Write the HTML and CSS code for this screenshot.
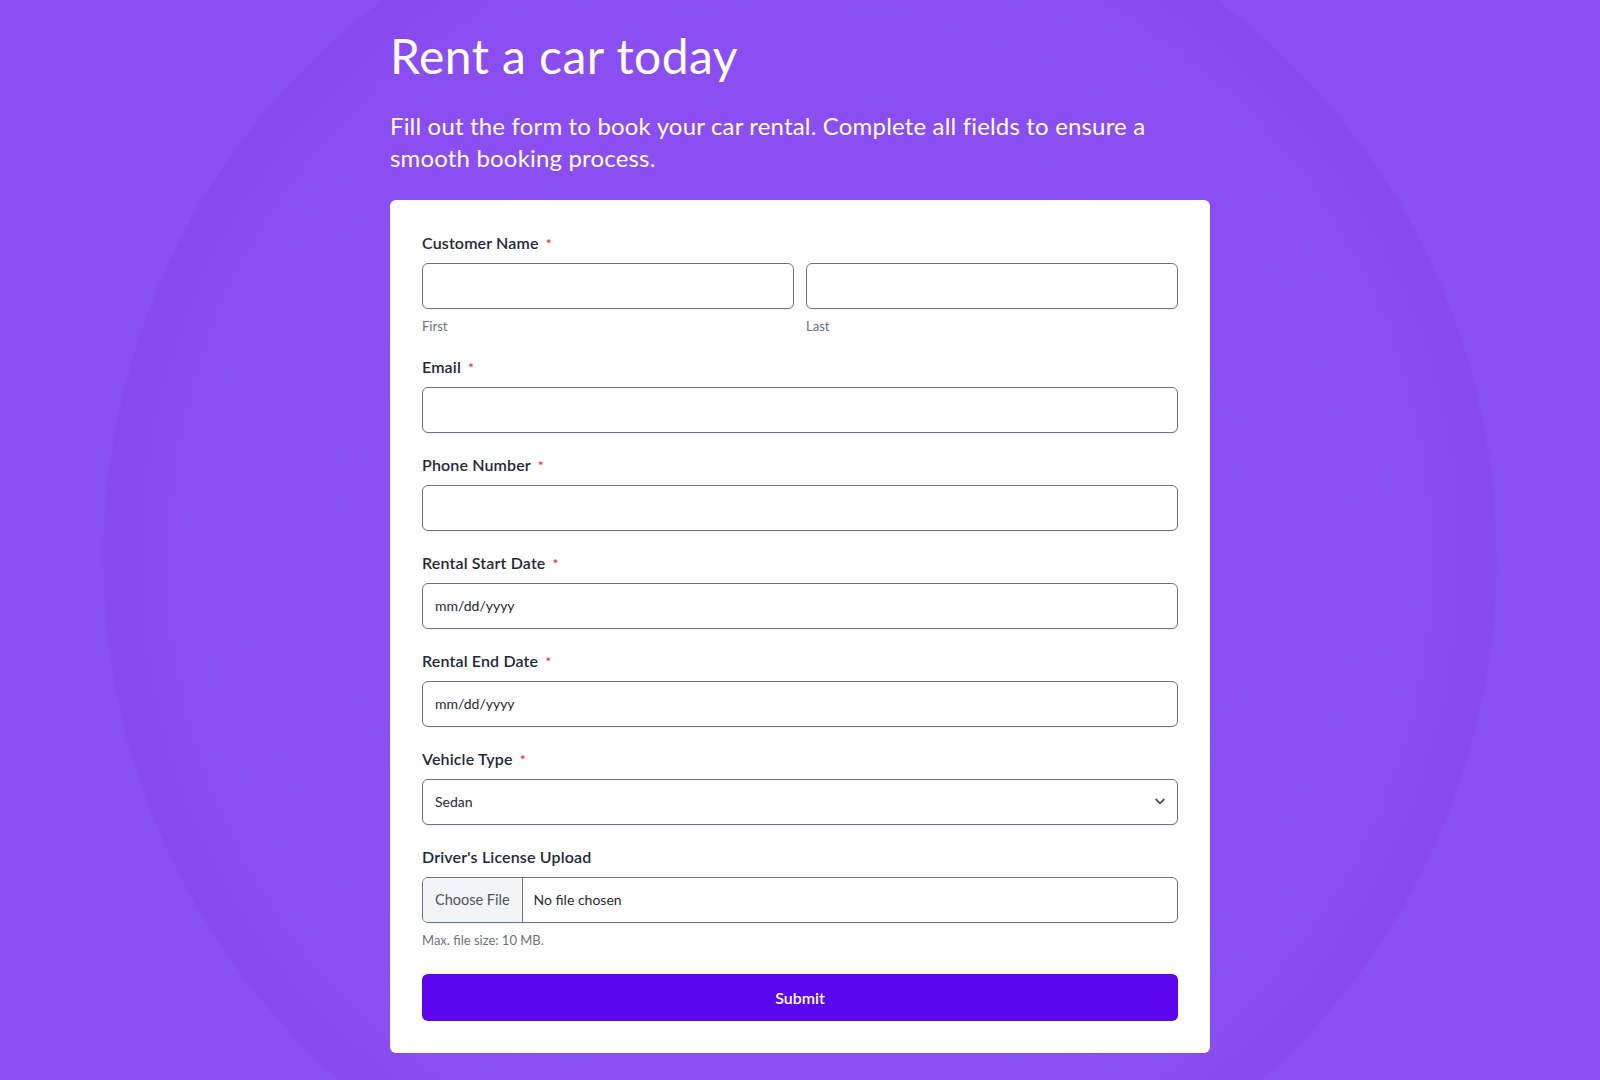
FILE: index.html
```html
<!DOCTYPE html>
<html lang="en">
<head>
<meta charset="utf-8">
<title>Rent a car today</title>
<link rel="stylesheet" href="styles.css">
</head>
<body>
<main class="page">
  <h1 class="title">Rent a car today</h1>
  <p class="intro">Fill out the form to book your car rental. Complete all fields to ensure a smooth booking process.</p>
  <form class="card">
    <div class="field">
      <div class="label">Customer Name <span class="req">*</span></div>
      <div class="name-row">
        <div class="name-col">
          <input class="control" type="text" aria-label="First">
          <div class="sublabel">First</div>
        </div>
        <div class="name-col">
          <input class="control" type="text" aria-label="Last">
          <div class="sublabel">Last</div>
        </div>
      </div>
    </div>
    <div class="field">
      <label class="label" for="email">Email <span class="req">*</span></label>
      <input class="control" id="email" type="email">
    </div>
    <div class="field">
      <label class="label" for="phone">Phone Number <span class="req">*</span></label>
      <input class="control" id="phone" type="tel">
    </div>
    <div class="field">
      <label class="label" for="start">Rental Start Date <span class="req">*</span></label>
      <input class="control date" id="start" type="text" placeholder="mm/dd/yyyy">
    </div>
    <div class="field">
      <label class="label" for="end">Rental End Date <span class="req">*</span></label>
      <input class="control date" id="end" type="text" placeholder="mm/dd/yyyy">
    </div>
    <div class="field">
      <label class="label" for="vehicle">Vehicle Type <span class="req">*</span></label>
      <div class="select-wrap">
        <select class="control select" id="vehicle">
          <option>Sedan</option>
          <option>SUV</option>
          <option>Truck</option>
          <option>Van</option>
        </select>
        <svg class="chevron" width="10" height="7" viewBox="0 0 10 7" aria-hidden="true"><path d="M1.2 1.5 5 5.3l3.8-3.8" fill="none" stroke="#4b5563" stroke-width="1.8" stroke-linecap="round" stroke-linejoin="round"/></svg>
      </div>
    </div>
    <div class="field last">
      <div class="label">Driver's License Upload</div>
      <div class="file">
        <span class="file-btn">Choose File</span>
        <span class="file-name">No file chosen</span>
      </div>
      <div class="sublabel hint">Max. file size: 10 MB.</div>
    </div>
    <button class="submit" type="button">Submit</button>
  </form>
</main>
</body>
</html>
```

FILE: styles.css
```css
html, body {
  margin: 0;
  padding: 0;
}
body {
  min-height: 1080px;
  font-family: Lato, "Noto Sans", sans-serif;
  color: #1e293b;
  background-color: #8b4ef1;
  background-image:
    radial-gradient(circle at 800px 558px,
      rgba(120, 50, 220, 0) 0,
      rgba(120, 50, 220, 0) 440px,
      rgba(120, 50, 220, 0.03) 460px,
      rgba(120, 50, 220, 0) 463px,
      rgba(120, 50, 220, 0) 540px,
      rgba(120, 50, 220, 0.04) 590px,
      rgba(120, 50, 220, 0) 593px,
      rgba(120, 50, 220, 0) 610px,
      rgba(120, 50, 220, 0.17) 695px,
      rgba(120, 50, 220, 0) 698px);
}
.page {
  width: 820px;
  margin: 0 auto;
  padding: 27px 0 28px;
}
.title {
  margin: 0 0 25px;
  font-size: 48px;
  line-height: 1.2;
  font-weight: 400;
  letter-spacing: 0.45px;
  color: #ffffff;
}
.intro {
  margin: 0 0 26px;
  font-size: 24px;
  line-height: 32px;
  font-weight: 400;
  letter-spacing: 0.17px;
  color: #ffffff;
}
.card {
  background: #ffffff;
  border-radius: 6px;
  padding: 31px 32px 32px;
  display: flex;
  flex-direction: column;
}
.field {
  display: flex;
  flex-direction: column;
  margin-bottom: 20px;
}
.field.last {
  margin-bottom: 25px;
}
.label {
  display: block;
  height: 24px;
  font-size: 16px;
  line-height: 24px;
  font-weight: 600;
  letter-spacing: 0.15px;
  color: #1e293b;
  margin-bottom: 8px;
}
.req {
  color: #dc2626;
  font-size: 14px;
  line-height: 1;
  font-weight: 400;
  margin-left: 3px;
}
.name-row {
  display: grid;
  grid-template-columns: 1fr 1fr;
  gap: 12px;
}
.name-col {
  display: flex;
  flex-direction: column;
}
.control {
  display: block;
  box-sizing: border-box;
  width: 100%;
  height: 46px;
  margin: 0;
  padding: 0 12px;
  border: 1px solid #6b7280;
  border-radius: 6px;
  background: #ffffff;
  box-shadow: 0 1px 2px rgba(0, 0, 0, 0.06);
  font-family: Lato, "Noto Sans", sans-serif;
  font-size: 14px;
  color: #1f2937;
  outline: none;
}
.date::placeholder {
  color: #1f2937;
  opacity: 1;
}
.select-wrap {
  position: relative;
}
.select {
  appearance: none;
  -webkit-appearance: none;
  padding-right: 40px;
}
.chevron {
  position: absolute;
  right: 13px;
  top: 19px;
  pointer-events: none;
}
.sublabel {
  margin-top: 8px;
  font-size: 13px;
  line-height: 18px;
  color: #6b7280;
}
.file {
  box-sizing: border-box;
  height: 46px;
  display: flex;
  align-items: stretch;
  border: 1px solid #6b7280;
  border-radius: 6px;
  overflow: hidden;
  box-shadow: 0 1px 2px rgba(0, 0, 0, 0.06);
  font-size: 14px;
}
.file-btn {
  display: flex;
  align-items: center;
  white-space: nowrap;
  padding: 0 12px;
  flex: 0 0 auto;
  background: #f3f4f6;
  border-right: 1px solid #6b7280;
  color: #4b5563;
  font-size: 14.5px;
}
.file-name {
  display: flex;
  align-items: center;
  white-space: nowrap;
  padding-left: 11px;
  color: #1f2937;
}
.submit {
  height: 47px;
  border: none;
  border-radius: 6px;
  background: #5b06ee;
  color: #ffffff;
  font-family: Lato, "Noto Sans", sans-serif;
  font-size: 16px;
  font-weight: 600;
  cursor: pointer;
}
```
